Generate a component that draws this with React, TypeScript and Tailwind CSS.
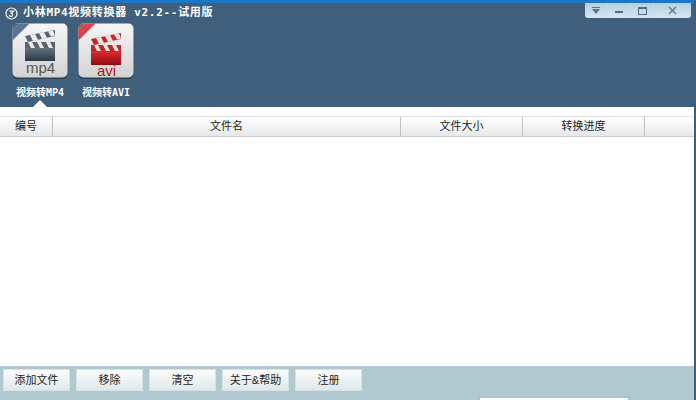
import React from "react";

const cjk = { fontFamily: '"Liberation Sans","Noto Sans CJK SC",sans-serif' };
const mono = { fontFamily: '"DejaVu Sans Mono","Noto Sans CJK SC",monospace' };

function Clapper({ kind }: { kind: "mp4" | "avi" }) {
  const mp4 = kind === "mp4";
  const top = mp4 ? "#5b646e" : "#c4262e";
  const bodyA = mp4 ? "#63717e" : "#de2c30";
  const bodyB = mp4 ? "#2d3947" : "#8f0d12";
  const rib = mp4 ? "#5a7594" : "#d8434c";
  const id = "g" + kind;
  const dy = mp4 ? 0 : 3;
  const stripe = mp4 ? "#ececec" : "#f0e4dc";
  return (
    <svg width="56" height="56" viewBox="0 0 56 56" className="block">
      <defs>
        <linearGradient id={id} x1="0" y1="0" x2="0" y2="1">
          <stop offset="0" stopColor={bodyA} />
          <stop offset="1" stopColor={bodyB} />
        </linearGradient>
        <linearGradient id={id + "c"} x1="0" y1="0" x2="0" y2="1">
          <stop offset="0" stopColor="#f6f6f6" />
          <stop offset="1" stopColor="#d2d2d2" />
        </linearGradient>
      </defs>
      <rect x="0.5" y="1.5" width="55" height="54.5" rx="5" fill="#1b2c3c" opacity="0.65" />
      <rect x="0.5" y="0.5" width="55" height="54" rx="5" fill={`url(#${id}c)`} />
      <path d="M0.5 5.5 Q0.5 0.5 5.5 0.5 L7 0.5 L0.5 7 Z" fill={mp4 ? "#4a627c" : "#8a5a70"} />
      <path d="M0.5 7 L7 0.5 L17.5 0.5 L0.5 17.5 Z" fill={rib} />
      <g transform={`translate(0 ${dy})`}>
        <path d="M13 13 L43 7 L43 13 L16 19 Z" fill={top} />
        <path d="M18 12l5-1 3 6-5 1zM27 10l5-1 3 6-5 1zM36 8.500l5-1 2 5-4 1z" fill={stripe} />
        <rect x="13" y="19" width="30" height="6" fill={top} />
        <path d="M16 19h4l3 6h-4zM25 19h4l3 6h-4zM34 19h4l3 6h-4z" fill={stripe} />
        <rect x="13" y="25" width="30" height={mp4 ? 13 : 14} fill={`url(#${id})`} />
      </g>
      <text
        x="28.500"
        y={mp4 ? 50 : 53}
        textAnchor="middle"
        fontSize="15"
        fill={mp4 ? "#555" : "#b3131a"}
        fontFamily="Liberation Sans, sans-serif"
      >
        {kind}
      </text>
    </svg>
  );
}

function Tool({ kind, label, active }: { kind: "mp4" | "avi"; label: string; active?: boolean }) {
  return (
    <div className="relative w-[66px] h-full flex flex-col items-center">
      <Clapper kind={kind} />
      <span className="mt-[7px] text-[10px] leading-[14px] font-bold text-white whitespace-nowrap" style={mono}>
        {label}
      </span>
      {active && (
        <div className="absolute bottom-0 left-1/2 -translate-x-1/2 w-0 h-0 border-x-[7px] border-x-transparent border-b-[7px] border-b-white" />
      )}
    </div>
  );
}

function Btn({ children }: { children: React.ReactNode }) {
  return (
    <button
      className="w-[67px] h-[22px] flex items-center justify-center text-[11px] text-[#222] border border-[#d6e2e6] bg-gradient-to-b from-[#fbfcfc] to-[#dfe8ea]"
      style={cjk}
    >
      {children}
    </button>
  );
}

function Head({ w, children, last }: { w: string; children?: React.ReactNode; last?: boolean }) {
  return (
    <div className={`${w} flex items-center justify-center border-r border-[#bcc2c6] ${last ? "border-r-0" : ""}`}>
      {children}
    </div>
  );
}

export default function App() {
  return (
    <div className="relative w-[696px] h-[400px] overflow-hidden flex flex-col bg-white border-r-2 border-r-[#3d5f7e]" style={cjk}>
      <div className="h-[3px] bg-[#1b78c8] shrink-0" />
      <header className="h-[104px] shrink-0 bg-[#3f5f7c] flex flex-col">
        <div className="h-[20px] flex items-start justify-between">
          <div className="flex items-center pl-[5px] gap-[5px] pt-[3px]">
            <svg width="13" height="13" viewBox="0 0 13 13">
              <circle cx="6.5" cy="6.5" r="5.5" fill="none" stroke="#fff" strokeWidth="1.2" />
              <path d="M4.5 4.2h4l-2.2 2.1a1.6 1.6 0 1 1-1.9 1.8" fill="none" stroke="#fff" strokeWidth="1.2" />
            </svg>
            <span className="text-[11px] leading-[14px] font-bold text-white whitespace-nowrap tracking-[0.7px]" style={mono}>
              小林MP4视频转换器 v2.2--试用版
            </span>
          </div>
          <div className="w-[106px] h-[15px] mr-[3px] rounded-b-[3px] bg-gradient-to-b from-[#b4cfe2] to-[#d7e6ef] flex items-center">
            <div className="w-[23px] h-full flex items-center justify-center border-r border-r-[#c7dae6]">
              <svg width="10" height="8" viewBox="0 0 10 8">
                <path d="M1 0h8v1H1zM1 2h8L5 7z" fill="#56748c" />
              </svg>
            </div>
            <div className="w-[23px] h-full flex items-center justify-center border-r border-r-[#c7dae6]">
              <div className="w-[8px] h-[2px] mt-[3px] bg-[#4d6c86]" />
            </div>
            <div className="w-[23px] h-full flex items-center justify-center border-r border-r-[#c7dae6]">
              <div className="w-[9px] h-[8px] border border-[#4d6c86] border-t-2" />
            </div>
            <div className="flex-1 h-full flex items-center justify-center">
              <svg width="9" height="9" viewBox="0 0 9 9">
                <path d="M1 1l7 7M8 1L1 8" stroke="#56748c" strokeWidth="1.2" />
              </svg>
            </div>
          </div>
        </div>
        <div className="flex-1 flex pl-[7px] min-h-0">
          <Tool kind="mp4" label="视频转MP4" active />
          <Tool kind="avi" label="视频转AVI" />
        </div>
      </header>

      <div className="h-[9px] shrink-0" />
      <div className="h-[21px] shrink-0 flex text-[11px] text-[#222] border-t border-t-[#dfe2e4] border-b border-b-[#c9cdd0] bg-gradient-to-b from-white to-[#e6e8ea]">
        <Head w="w-[53px]">编号</Head>
        <Head w="w-[348px]">文件名</Head>
        <Head w="w-[122px]">文件大小</Head>
        <Head w="w-[122px]">转换进度</Head>
        <Head w="flex-1" last />
      </div>
      <main className="flex-1 bg-white" />

      <footer className="h-[34px] shrink-0 bg-[#b0c8d0] flex gap-[6px] pl-[3px] pt-[3px]">
        <Btn>添加文件</Btn>
        <Btn>移除</Btn>
        <Btn>清空</Btn>
        <Btn>关于&amp;帮助</Btn>
        <Btn>注册</Btn>
      </footer>
      <div className="absolute left-[478px] top-[396px] w-[152px] h-[8px] bg-white border-2 border-[#a8c0dc]" />
    </div>
  );
}
